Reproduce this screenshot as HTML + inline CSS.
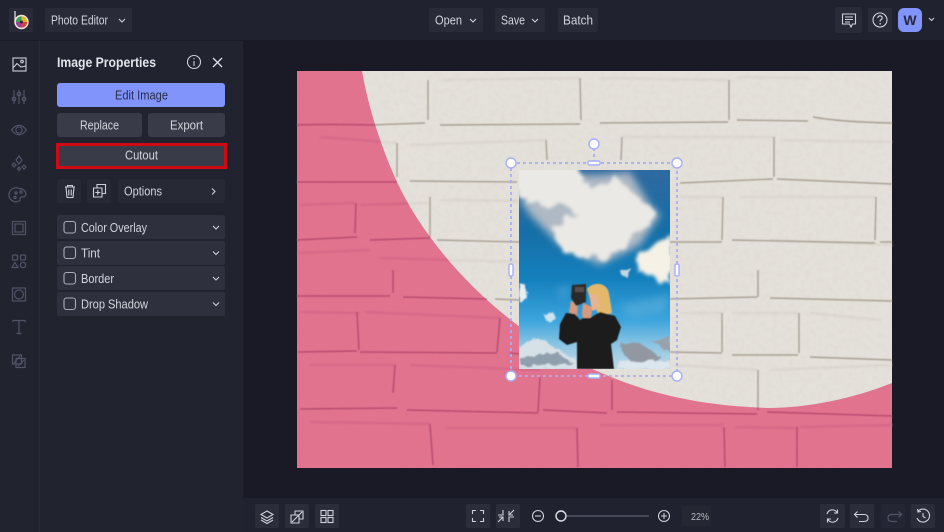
<!DOCTYPE html>
<html><head><meta charset="utf-8"><style>
html,body{margin:0;padding:0;background:#191a26;width:944px;height:532px;overflow:hidden}
svg{display:block}
text{font-family:"Liberation Sans",sans-serif}
.t{font-size:12.5px;fill:#d2d4dc}
.r{fill:none;stroke:#515467;stroke-width:1.2}
.w{fill:none;stroke:#cfd1da;stroke-width:1.1}
</style></head><body>
<svg width="944" height="532" viewBox="0 0 944 532" xmlns="http://www.w3.org/2000/svg">
<defs>
<clipPath id="pk"><path d="M297 71L362 71C368 105 380 145 397 182C410 210 430 240 457 270C480 295 500 312 520 327C545 347 570 360 590 368C630 386 680 405 767 408C810 408 855 398 892 383L892 468L297 468Z"/></clipPath>
<clipPath id="ph"><rect x="519" y="170" width="151" height="199"/></clipPath>
<filter id="cl" x="-20%" y="-20%" width="140%" height="140%"><feTurbulence type="fractalNoise" baseFrequency=".07" numOctaves="3" seed="7" result="n"/><feDisplacementMap in="SourceGraphic" in2="n" scale="16" xChannelSelector="R" yChannelSelector="G"/><feGaussianBlur stdDeviation="1.800"/></filter>
<filter id="cs" x="-30%" y="-30%" width="160%" height="160%"><feTurbulence type="fractalNoise" baseFrequency=".12" numOctaves="3" seed="3" result="n"/><feDisplacementMap in="SourceGraphic" in2="n" scale="7" xChannelSelector="R" yChannelSelector="G"/><feGaussianBlur stdDeviation=".9"/></filter>
<filter id="b3" x="-30%" y="-30%" width="160%" height="160%"><feGaussianBlur stdDeviation="4"/></filter>
<filter id="b0" x="-5%" y="-5%" width="110%" height="110%"><feGaussianBlur stdDeviation=".6"/></filter>
<filter id="sl" x="0" y="0" width="100%" height="100%" filterUnits="userSpaceOnUse"><feGaussianBlur stdDeviation=".55"/></filter>
<filter id="sl2" x="0" y="0" width="100%" height="100%" filterUnits="userSpaceOnUse"><feGaussianBlur stdDeviation="1"/></filter>
<filter id="tex" x="0" y="0" width="100%" height="100%"><feTurbulence type="fractalNoise" baseFrequency=".18" numOctaves="3" seed="4"/><feColorMatrix values="0 0 0 0 .4 0 0 0 0 .33 0 0 0 0 .33 0 0 0 1.200 -.5"/></filter>
<linearGradient id="sky" x1="0" y1="0" x2="0" y2="1"><stop offset="0" stop-color="#2f699f"/><stop offset=".3" stop-color="#166ea6"/><stop offset=".55" stop-color="#1480bd"/><stop offset=".75" stop-color="#3aa3dc"/><stop offset=".88" stop-color="#8cc5e4"/><stop offset="1" stop-color="#c4d9e6"/></linearGradient>
<g id="lines" fill="none">
<path d="M297 125Q330 124 372 125L425 123M440 125L580 124M600 123L728 122M737 120L808 121M813 117Q840 122 892 123M428 80L428 120M580 78L581 120M729 80L729 120"/>
<path d="M297 182L397 182M410 181L517 182M680 183L773 179M777 179L892 184M397 143L397 177M546 140L547 160M622 137L621 160M774 137L774 177"/>
<path d="M297 240L357 237M370 240L430 238M437 240L520 242M670 242L722 242M732 240L875 243M880 242L892 242M356 203L355 233M430 197L430 237M723 197L722 240M876 197L875 240"/>
<path d="M297 296L390 296M403 297L487 299M495 299L520 300M670 299L757 297M770 298L892 301M393 270L393 293M758 270L758 297"/>
<path d="M298 352L357 351M360 352L497 353M510 353L520 354M670 352L722 353M732 355L798 355M810 357L892 360M357 312L359 350M500 318L497 352M722 313L722 352M799 313L799 353"/>
<path d="M300 409L397 408M407 410L538 413M543 410L607 413M617 412L757 414M767 412L892 416M395 365L393 393M540 377L538 412M758 370L758 410M612 380L612 410"/>
<path d="M430 424L433 465M577 428L578 467M724 427L725 467M797 427L797 467"/>
</g>
<g id="lines2" fill="none">
<path d="M300 205L355 203M360 205L430 203M440 200L640 202M298 253L370 250M380 258L520 262M300 312L360 313M365 312L500 318M310 365L395 365M410 365L540 370M310 422L430 424M445 428L577 428M600 425L723 425M735 427L797 428M800 427L892 425M442 80L580 78M600 78L729 80M737 77L808 78M320 137L397 143M410 145L546 140M622 137L774 137M780 140L892 142M740 197L876 197M680 197L723 197M732 313L799 313M810 313L880 320M680 313L722 313M770 240L892 245M675 365L758 370M770 370L892 365"/>
</g>
</defs>
<rect width="944" height="532" fill="#191a26"/>
<rect width="944" height="40" fill="#20222f"/><rect y="40" width="944" height="1" fill="#1a1b27"/>
<rect y="41" width="243" height="491" fill="#21232f"/><rect x="39" y="41" width="1" height="491" fill="#292b37"/>
<rect x="243" y="498" width="701" height="34" fill="#20222f"/>
<!-- wall -->
<rect x="297" y="71" width="595" height="397" fill="#e4e0da"/>
<use href="#lines2" stroke="#d3cfc6" stroke-width="1.200" filter="url(#sl2)"/>
<use href="#lines" stroke="#a9a294" stroke-width="1.400" filter="url(#sl)"/>
<g clip-path="url(#pk)"><rect x="297" y="71" width="595" height="397" fill="#e2738f"/>
<use href="#lines2" stroke="#ca5c7f" stroke-width="1.200" filter="url(#sl2)"/>
<use href="#lines" stroke="#b84b70" stroke-width="1.500" filter="url(#sl)"/></g>
<rect x="297" y="71" width="595" height="397" filter="url(#tex)" opacity=".1"/>
<!-- photo -->
<g clip-path="url(#ph)">
<rect x="519" y="170" width="151" height="199" fill="url(#sky)"/>
<g filter="url(#b3)"><path d="M600 175L630 172L650 205L660 215L640 245L600 265L560 245L530 215L520 200L540 175Z" fill="#aeb9c4"/></g>
<g filter="url(#cl)">
<path d="M512 163L570 163L590 190L612 178L640 200L655 215L640 235L618 250L606 258L580 258L555 240L552 226L575 215L560 205L535 205L512 190Z" fill="#ebe9e5"/>
<path d="M638 255L672 232L672 285L658 283L638 268Z" fill="#f5f1e6"/>
</g>
<g filter="url(#cs)">
<path d="M519 282L525 285L527 298L519 302Z" fill="#e8eef2"/>
<path d="M545 314L552 312L555 318L549 321Z" fill="#cfe2ee"/>
<path d="M620 270L629 270L628 277L622 276Z" fill="#c6d6e0"/>
<path d="M519 345L540 338L577 360L577 369L519 369Z" fill="#d6e0e7"/>
<path d="M520 358L556 352L574 364L520 366Z" fill="#8f9fad"/>
<path d="M620 344L640 342L660 358L650 366L628 360Z" fill="#9198a1"/>
<path d="M652 342L670 337L670 352Z" fill="#9aa1aa"/>
<path d="M618 362L670 360L670 369L618 369Z" fill="#dbe6ee"/>
</g>
<g filter="url(#b3)"><path d="M620 305L670 295L665 312L630 318Z" fill="#5cb0dc" opacity=".6"/><path d="M555 290L570 285L565 300Z" fill="#5aa6d6" opacity=".6"/></g>
<g filter="url(#b0)">
<path d="M587 289Q592 283 600 284Q608 286 609 294Q611 305 612 313L600 316L591 302Z" fill="#e4b86c"/>
<path d="M589 293L598 296L600 308L592 311Z" fill="#e5b391"/>
<path d="M569 312L571 301L578 304L577 316ZM582 314L583 303L592 307L591 318L583 318Z" fill="#d89a7d"/>
<path d="M572 285L586 284L586 302L576 306L571 298Z" fill="#2c2a2a"/>
<path d="M575 287L584 287L584 292L575 292Z" fill="#574f48"/>
<path d="M566 313L575 314L580 320L583 318L590 318L600 312L615 316L621 327L617 340L611 344L614 369L577 369L577 342L567 345L559 339L560 324Z" fill="#1e1c1f"/>
</g>
</g>
<!-- selection -->
<g fill="none" stroke="#a8adf8" stroke-width="1.800" stroke-dasharray="3 3">
<rect x="511" y="163" width="166" height="213"/><path d="M594 148L594 163"/></g>
<g fill="#fff" stroke="#a8adf8" stroke-width="1.400">
<circle cx="594" cy="144" r="5"/><circle cx="511" cy="163" r="5"/><circle cx="677" cy="163" r="5"/><circle cx="511" cy="376" r="5"/><circle cx="677" cy="376" r="5"/>
<rect x="588" y="161" width="12" height="4" rx="1.500"/><rect x="588" y="374" width="12" height="4" rx="1.500"/><rect x="509" y="264" width="4" height="12" rx="1.500"/><rect x="675" y="264" width="4" height="12" rx="1.500"/></g>

<!-- top buttons -->
<g fill="#292b39">
<rect x="9" y="8" width="24" height="24" rx="2"/><rect x="45" y="8" width="87" height="24" rx="2"/>
<rect x="429" y="8" width="54" height="24" rx="2"/><rect x="495" y="8" width="50" height="24" rx="2"/><rect x="558" y="8" width="40" height="24" rx="2"/>
<rect x="835" y="7" width="27" height="26" rx="2"/><rect x="868" y="8" width="24" height="24" rx="2"/></g>
<!-- logo -->
<path d="M15 11L15 22" stroke="#e9e9ee" stroke-width="1.200"/>
<circle cx="21.500" cy="22" r="7.200" fill="#f3e3d3"/>
<circle cx="21.500" cy="22" r="5.600" fill="#3f9d5c"/><path d="M21.500 22L21.500 16.400A5.600 5.600 0 0 1 27.100 22Z" fill="#e5b22b"/><path d="M21.500 22L27.100 22A5.600 5.600 0 0 1 21.500 27.600Z" fill="#d9433d"/><path d="M21.500 22L21.500 27.600A5.600 5.600 0 0 1 15.900 22Z" fill="#9a3f9e"/><circle cx="21.500" cy="22" r="1.500" fill="#2a2a30"/>
<text class="t" x="51" y="24.500" textLength="57" lengthAdjust="spacingAndGlyphs">Photo Editor</text>
<path d="M119 19L122 22L125 19" class="w"/>
<text class="t" x="435" y="24.500" textLength="27" lengthAdjust="spacingAndGlyphs">Open</text><path d="M470 19L473 22L476 19" class="w"/>
<text class="t" x="501" y="24.500" textLength="24" lengthAdjust="spacingAndGlyphs">Save</text><path d="M532 19L535 22L538 19" class="w"/>
<text class="t" x="563" y="24.500" textLength="30" lengthAdjust="spacingAndGlyphs">Batch</text>
<path d="M842.500 14H855.500V24H852.500L851 27L849.500 24H842.500ZM845 17H853M845 19.500H853M845 22H850" class="w"/>
<circle cx="880" cy="20" r="7" class="w"/><path d="M877.800 18Q878 15.800 880.200 15.800Q882.300 16 882.200 18Q882 19.300 880.200 20.300V21.500" class="w"/><circle cx="880.200" cy="23.800" r=".8" fill="#d4d6de"/>
<rect x="898" y="8" width="24" height="24" rx="6" fill="#8094fb"/>
<text x="910" y="25" text-anchor="middle" font-size="14" font-weight="700" fill="#27293f">W</text>
<path d="M929 18L931.500 20.500L934 18" class="w"/>

<!-- rail icons -->
<rect x="13" y="58" width="13" height="13" class="w" stroke-width="1.400"/><circle cx="22" cy="61.500" r="1.300" class="w"/><path d="M13 68L17 63.500L21 67L26 66" class="w"/>
<path d="M14 90V104M19 90V104M24 90V104" class="r"/><circle cx="14" cy="99" r="1.800" class="r"/><circle cx="19" cy="94" r="1.800" class="r"/><circle cx="24" cy="99" r="1.800" class="r"/>
<path d="M11.500 130Q19 120.500 26.500 130Q19 139.500 11.500 130Z" class="r"/><circle cx="19" cy="130" r="3.200" class="r"/>
<path d="M19 156L22 160L19 164L16 160ZM14 163L16 165L14 167L12 165ZM24 165L26 167L24 169L22 167ZM19 167L20.500 169L19 170.500L17.500 169Z" class="r"/>
<path d="M19 188.500A7 7 0 1 0 18 201.500Q21 201 20 198.500Q20 196.500 23 197Q26 197 26 193Q24 188.500 19 188.500Z" class="r"/><circle cx="16" cy="193" r="1.100" class="r"/><circle cx="21" cy="192" r="1.100" class="r"/><circle cx="15" cy="197.500" r="1.100" class="r"/>
<rect x="12.500" y="221.500" width="13" height="13" class="r"/><rect x="15" y="224" width="8" height="8" class="r"/>
<rect x="12.500" y="255" width="5" height="5" rx="1" class="r"/><rect x="20.500" y="255" width="5" height="5" rx="1" class="r"/><path d="M15 262.500L18 267.500H12Z" class="r"/><circle cx="23" cy="265" r="2.700" class="r"/>
<rect x="12.500" y="288" width="13" height="13" class="r"/><circle cx="19" cy="294.500" r="4.500" class="r"/>
<path d="M13 322V320.500H25V322M19 320.500V333.500M16.500 333.500H21.500" class="r"/>
<rect x="12.500" y="355" width="9" height="9" class="r"/><rect x="16" y="358.500" width="9" height="9" class="r"/><path d="M14 363L20 356M18 366L24 360" class="r"/>

<!-- panel -->
<text x="57" y="67" font-size="13.500" font-weight="700" fill="#e3e4ea" textLength="99" lengthAdjust="spacingAndGlyphs">Image Properties</text>
<circle cx="194" cy="62" r="6.500" class="w"/><path d="M194 61V66M194 58V59.300" class="w"/>
<path d="M213 58L222 67M222 58L213 67" stroke="#dcdee5" stroke-width="1.300" fill="none"/>
<rect x="57" y="83" width="168" height="24" rx="3" fill="#8094fb"/>
<text x="115" y="99.500" font-size="12.500" fill="#2b2e49" textLength="53" lengthAdjust="spacingAndGlyphs">Edit Image</text>
<rect x="57" y="113" width="85" height="24" rx="3" fill="#393b49"/>
<rect x="148" y="113" width="77" height="24" rx="3" fill="#393b49"/>
<text class="t" x="80" y="129.500" textLength="39" lengthAdjust="spacingAndGlyphs">Replace</text>
<text class="t" x="170" y="129.500" textLength="33" lengthAdjust="spacingAndGlyphs">Export</text>
<rect x="57.500" y="144.500" width="168" height="23" fill="#393b49" stroke="#cf0a14" stroke-width="3"/>
<text class="t" x="125" y="159.500" textLength="33" lengthAdjust="spacingAndGlyphs">Cutout</text>
<g fill="#272935"><rect x="57" y="179" width="24" height="24" rx="3"/><rect x="87" y="179" width="24" height="24" rx="3"/><rect x="118" y="179" width="107" height="24" rx="3"/></g>
<path d="M65 187H75M67.500 187V185.500H72.500V187M66 187L67 197.500H73L74 187M68.800 189.500V195.500M71.200 189.500V195.500" class="w"/>
<path d="M97 184.500H105.500V193.500H102V188H97ZM93.500 188H102V197H93.500ZM97.800 190V195M95.300 192.500H100.300" class="w"/>
<text class="t" x="124" y="195.500" textLength="38" lengthAdjust="spacingAndGlyphs">Options</text>
<path d="M212 188.500L215 191.500L212 194.500" class="w"/>
<g fill="#2e303e"><rect x="57" y="215" width="168" height="24" rx="2"/><rect x="57" y="241" width="168" height="24" rx="2"/><rect x="57" y="266" width="168" height="24" rx="2"/><rect x="57" y="292" width="168" height="24" rx="2"/></g>
<g fill="none" stroke="#a9abb6" stroke-width="1.100"><rect x="64" y="221.500" width="11.500" height="11.500" rx="2.500"/><rect x="64" y="247" width="11.500" height="11.500" rx="2.500"/><rect x="64" y="272.500" width="11.500" height="11.500" rx="2.500"/><rect x="64" y="298" width="11.500" height="11.500" rx="2.500"/></g>
<text class="t" x="81" y="232" textLength="66" lengthAdjust="spacingAndGlyphs">Color Overlay</text>
<text class="t" x="81" y="257.500" textLength="19" lengthAdjust="spacingAndGlyphs">Tint</text>
<text class="t" x="81" y="283" textLength="33" lengthAdjust="spacingAndGlyphs">Border</text>
<text class="t" x="81" y="308.500" textLength="67" lengthAdjust="spacingAndGlyphs">Drop Shadow</text>
<path d="M213 226L216 229L219 226M213 251.500L216 254.500L219 251.500M213 277L216 280L219 277M213 302.500L216 305.500L219 302.500" class="w"/>

<!-- bottom bar -->
<g fill="#2b2d3b"><rect x="255" y="504" width="24" height="24" rx="2"/><rect x="285" y="504" width="24" height="24" rx="2"/><rect x="315" y="504" width="24" height="24" rx="2"/><rect x="466" y="504" width="24" height="24" rx="2"/><rect x="496" y="504" width="24" height="24" rx="2"/><rect x="820" y="504" width="25" height="24" rx="2"/><rect x="850" y="504" width="24" height="24" rx="2"/><rect x="911" y="504" width="24" height="24" rx="2"/></g>
<rect x="881" y="504" width="24" height="24" rx="2" fill="#242633"/>
<rect x="682" y="506" width="29" height="20" rx="2" fill="#252733"/>
<path d="M267 511L273 514.500L267 518L261 514.500ZM261 517.500L267 521L273 517.500M261 520L267 523.500L273 520" class="w"/>
<path d="M295 511H303V519H299V515H295ZM291 515H299V523H291ZM292 522L302 512" class="w"/>
<g class="w"><rect x="321" y="510.500" width="5" height="5"/><rect x="328" y="510.500" width="5" height="5"/><rect x="321" y="517.500" width="5" height="5"/><rect x="328" y="517.500" width="5" height="5"/></g>
<path d="M472.500 514V510.500H476M480 510.500H483.500V514M483.500 518V521.500H480M476 521.500H472.500V518" class="w"/>
<path d="M498 515H503V510M514 510L509 515M509 511V515H513M498 522L503 517M499 517H503V521M514 517H509V522" class="w"/>
<circle cx="538" cy="516" r="5.500" class="w"/><path d="M535 516H541" class="w"/>
<path d="M567 516H649" stroke="#5c5f6f" stroke-width="1.200"/>
<circle cx="561" cy="516" r="5" fill="#20222f" stroke="#e0e1e7" stroke-width="1.400"/>
<circle cx="664" cy="516" r="5.500" class="w"/><path d="M661 516H667M664 513V519" class="w"/>
<text x="691" y="520" font-size="10" fill="#b9bbc5" textLength="18" lengthAdjust="spacingAndGlyphs">22%</text>
<path d="M827 514A5.500 5.500 0 0 1 837 512.500M838 518A5.500 5.500 0 0 1 828 519.500M837.500 509.500V513H834M827.500 522.500V519H831" class="w"/>
<path d="M857.500 511.500L854.500 514.500L857.500 517.500M855 514.500H864Q868 514.500 868 518Q868 521.500 864 521.500H859" class="w"/>
<path d="M898.500 511.500L901.500 514.500L898.500 517.500M901 514.500H892Q888 514.500 888 518Q888 521.500 892 521.500H897" class="r"/>
<path d="M918 511.500A6.500 6.500 0 1 1 917 518M917.500 509L918 512L921 511.500M923 513V516.500L925.500 518" class="w"/>
</svg>
</body></html>
